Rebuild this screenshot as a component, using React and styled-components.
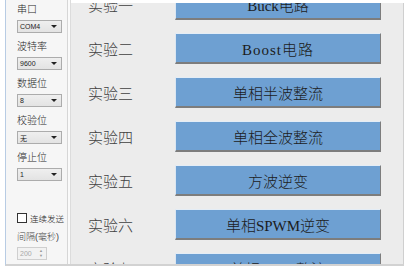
import React from "react";
import styled, { createGlobalStyle } from "styled-components";

const GlobalStyle = createGlobalStyle`
  html, body {
    margin: 0;
    padding: 0;
    background: #ffffff;
  }
  body {
    font-family: "Liberation Sans", "Noto Sans CJK SC", sans-serif;
  }
`;

const Window = styled.div`
  width: 410px;
  height: 272px;
  background: #ffffff;
  overflow: hidden;
`;

const Frame = styled.div`
  display: flex;
  margin-left: 5px;
  width: 399px;
  height: 266px;
  border-left: 1px solid #b8cce4;
  border-bottom: 2px solid #d2d2d2;
  box-sizing: border-box;
`;

const SidePanel = styled.div`
  width: 62px;
  flex-shrink: 0;
  display: flex;
  flex-direction: column;
  padding: 3px 0 0 11px;
  box-sizing: border-box;
  background: #f6f6f6;
  border-right: 1px solid #d6d6d6;
`;

const Field = styled.div`
  display: flex;
  flex-direction: column;
  gap: 3px;
  margin-bottom: 7px;
`;

const FieldLabel = styled.div`
  height: 14px;
  line-height: 14px;
  font-size: 10px;
  font-weight: 300;
  color: #1e1e1e;
  white-space: nowrap;
`;

const Combo = styled.div`
  display: flex;
  align-items: center;
  justify-content: space-between;
  width: 45px;
  height: 13px;
  box-sizing: border-box;
  padding: 0 4px 0 2px;
  border: 1px solid #acacac;
  background: linear-gradient(#efefef, #e3e3e3);
  font-size: 7px;
  color: #222;
`;

const Caret = styled.span`
  width: 0;
  height: 0;
  border-left: 3px solid transparent;
  border-right: 3px solid transparent;
  border-top: 3px solid #222;
`;

const CheckRow = styled.label`
  display: flex;
  align-items: center;
  gap: 3px;
  margin-top: 24px;
  height: 12px;
  font-size: 8.5px;
  font-weight: 300;
  color: #1e1e1e;
  white-space: nowrap;
`;

const Box = styled.span`
  width: 8px;
  height: 8px;
  border: 1px solid #333;
  background: #fff;
`;

const IntervalLabel = styled(FieldLabel)`
  margin-top: 6px;
  font-size: 9px;
  color: #444;
`;

const Spin = styled.div`
  display: flex;
  align-items: center;
  justify-content: space-between;
  margin-top: 3px;
  width: 30px;
  height: 13px;
  box-sizing: border-box;
  padding: 0 3px 0 2px;
  border: 1px solid #cfcfcf;
  background: #f2f2f2;
  font-size: 7px;
  color: #a8a8a8;
`;

const SpinArrows = styled.span`
  display: flex;
  flex-direction: column;
  gap: 1px;
  font-size: 4px;
  line-height: 4px;
  color: #999;
`;

const Divider = styled.div`
  width: 2px;
  flex-shrink: 0;
  background: #fafafa;
  border-right: 1px solid #dcdcdc;
`;

const Workspace = styled.div`
  flex: 1;
  margin-top: 3px;
  background: #ececec;
  border-right: 1px solid #cfcfcf;
  overflow: hidden;
`;

const List = styled.div`
  display: flex;
  flex-direction: column;
  gap: 13px;
  margin-top: -14px;
  padding: 0 22px 0 17px;
`;

const Row = styled.div`
  display: flex;
  align-items: center;
`;

const RowLabel = styled.div`
  width: 87px;
  flex-shrink: 0;
  font-family: "Liberation Serif", "Noto Sans CJK SC", serif;
  font-size: 15px;
  font-weight: 300;
  color: #404040;
`;

const RunButton = styled.button`
  flex: 1;
  height: 31px;
  box-sizing: border-box;
  border: 1px solid;
  border-color: #e4edf6 #7d7d7d #7d7d7d #dbe6f1;
  border-bottom-width: 2px;
  background: #6ea0d2;
  font-family: "Liberation Serif", "Noto Sans CJK SC", serif;
  font-size: 15px;
  font-weight: 300;
  color: #1c1c1c;
  letter-spacing: ${(p) => (p.$wide ? "1px" : "0")};
  padding: 0;
  cursor: pointer;
`;

const settings = [
  { label: "串口", value: "COM4" },
  { label: "波特率", value: "9600" },
  { label: "数据位", value: "8" },
  { label: "校验位", value: "无" },
  { label: "停止位", value: "1" },
];

const experiments = [
  { label: "实验一", name: "Buck电路" },
  { label: "实验二", name: "Boost电路", wide: true },
  { label: "实验三", name: "单相半波整流" },
  { label: "实验四", name: "单相全波整流" },
  { label: "实验五", name: "方波逆变" },
  { label: "实验六", name: "单相SPWM逆变" },
  { label: "实验七", name: "单相PWM整流" },
];

const App = () => {
  return (
    <Window>
      <GlobalStyle />
      <Frame>
        <SidePanel>
          {settings.map((s) => (
            <Field key={s.label}>
              <FieldLabel>{s.label}</FieldLabel>
              <Combo>
                <span>{s.value}</span>
                <Caret />
              </Combo>
            </Field>
          ))}
          <CheckRow>
            <Box />
            连续发送
          </CheckRow>
          <IntervalLabel>间隔(毫秒)</IntervalLabel>
          <Spin>
            <span>200</span>
            <SpinArrows>
              <span>▲</span>
              <span>▼</span>
            </SpinArrows>
          </Spin>
        </SidePanel>
        <Divider />
        <Workspace>
          <List>
            {experiments.map((e) => (
              <Row key={e.label}>
                <RowLabel>{e.label}</RowLabel>
                <RunButton $wide={e.wide}>{e.name}</RunButton>
              </Row>
            ))}
          </List>
        </Workspace>
      </Frame>
    </Window>
  );
};

export default App;
